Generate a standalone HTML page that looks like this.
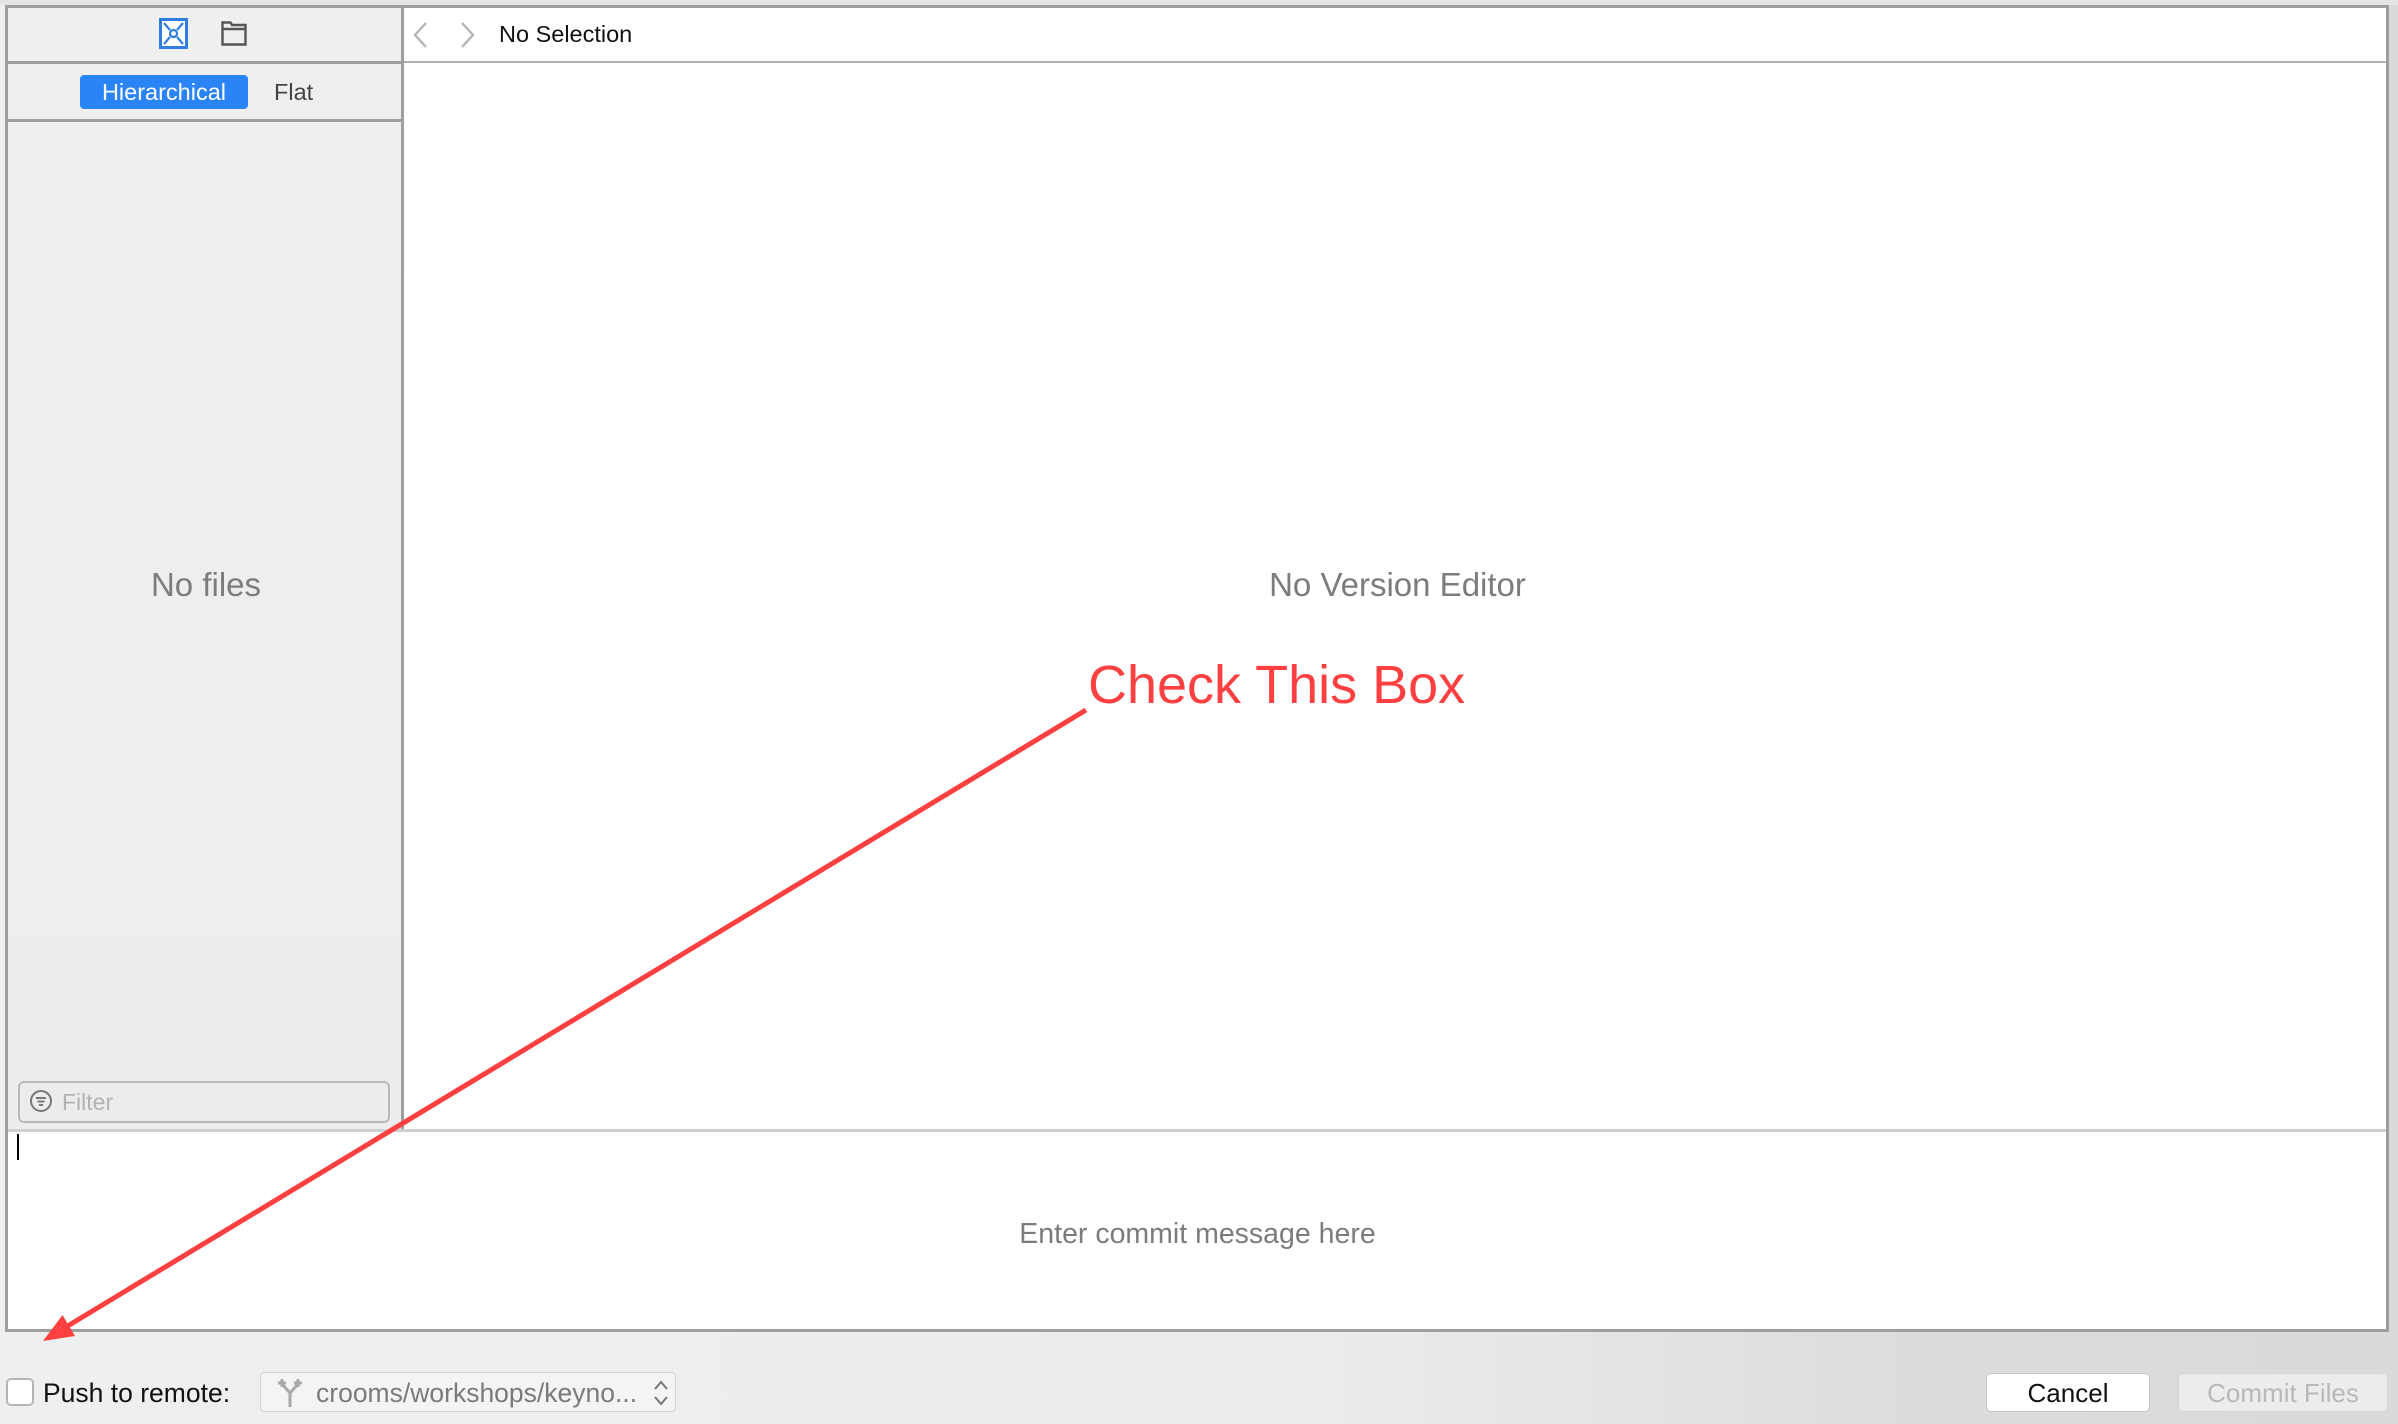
<!DOCTYPE html>
<html><head><meta charset="utf-8"><style>
*{margin:0;padding:0;box-sizing:border-box}
body{width:2398px;height:1424px;overflow:hidden;background:linear-gradient(90deg,#efefef 0%,#ececec 55%,#dcdcdd 80%,#dadadb 100%);font-family:"Liberation Sans",sans-serif;position:relative}
.a{position:absolute}
</style></head><body>
<div class="a" style="left:0;top:0;width:2398px;height:5px;background:#e4e4e4"></div>
<div class="a" style="left:5px;top:5px;width:2384px;height:1327px;border:3px solid #9e9e9e;background:#fff"></div>
<div class="a" style="left:8px;top:8px;width:396px;height:1123px;background:linear-gradient(180deg,#efefef,#ededed);border-right:3px solid #9e9e9e"></div>
<div class="a" style="left:8px;top:61px;width:396px;height:3px;background:#9e9e9e"></div>
<div class="a" style="left:8px;top:119px;width:396px;height:3px;background:#9e9e9e"></div>
<div class="a" style="left:404px;top:61px;width:1982px;height:2px;background:#b0b0b0"></div>
<svg class="a" style="left:159px;top:18px" width="29" height="31" viewBox="0 0 29 31"><rect width="29" height="31" fill="#2f7de1"/><rect x="3" y="3" width="23" height="25" fill="#fff"/><circle cx="14.5" cy="15.5" r="3.5" fill="none" stroke="#2f7de1" stroke-width="2.2"/><path d="M5 5l6 7M24 5l-6 7M5 26l6-7M24 26l-6-7" stroke="#2f7de1" stroke-width="2.2"/></svg>
<svg class="a" style="left:221px;top:21px" width="26" height="25" viewBox="0 0 26 25"><path d="M1.5 4V23.5H24.5V4H11L9.5 1.5H1.5V4Z M1.5 8H24.5" fill="none" stroke="#555" stroke-width="2.4"/></svg>
<div class="a" style="left:80px;top:75px;width:168px;height:34px;background:#2a84f5;border-radius:4px;color:#fff;font-size:23.5px;line-height:34px;text-align:center">Hierarchical</div>
<div class="a" style="left:274px;top:75px;font-size:23.5px;line-height:34px;color:#444">Flat</div>
<svg class="a" style="left:410px;top:20px" width="70" height="30" viewBox="0 0 70 30"><path d="M16 3L5 15L16 27" fill="none" stroke="#b5b5b5" stroke-width="2.4"/><path d="M52 3L63 15L52 27" fill="none" stroke="#b5b5b5" stroke-width="2.4"/></svg>
<div class="a" style="left:499px;top:21px;font-size:23.5px;color:#111">No Selection</div>
<div class="a" style="left:8px;top:566px;width:396px;text-align:center;font-size:33px;color:#7c7c7c">No files</div>
<div class="a" style="left:1100px;top:566px;width:595px;text-align:center;font-size:33px;color:#7c7c7c">No Version Editor</div>
<div class="a" style="left:18px;top:1081px;width:372px;height:42px;border:2px solid #b9b9b9;border-radius:6px;background:#ececec"></div>
<svg class="a" style="left:29px;top:1089px" width="24" height="24" viewBox="0 0 24 24"><circle cx="12" cy="12" r="10" fill="none" stroke="#777" stroke-width="2"/><path d="M7 9h10M8.5 12.5h7M10 16h4" stroke="#777" stroke-width="2"/></svg>
<div class="a" style="left:62px;top:1089px;font-size:23px;color:#b2b2b2">Filter</div>
<div class="a" style="left:8px;top:1129px;width:2378px;height:3px;background:#d0d0d0"></div>
<div class="a" style="left:17px;top:1134px;width:2px;height:26px;background:#000"></div>
<div class="a" style="left:800px;top:1218px;width:795px;text-align:center;font-size:28.5px;color:#7c7c7c">Enter commit message here</div>
<div class="a" style="left:6px;top:1378px;width:28px;height:28px;border:2px solid #b5b5b5;border-radius:5px;background:#fff"></div>
<div class="a" style="left:43px;top:1378px;font-size:26.5px;color:#111;white-space:nowrap">Push to remote:</div>
<div class="a" style="left:260px;top:1372px;width:416px;height:40px;border:1px solid #d4d4d4;border-radius:5px;background:#f4f4f4"></div>
<svg class="a" style="left:277px;top:1379px" width="26" height="28" viewBox="0 0 26 28"><path d="M13 28V14M13 14L5 5M13 14L21 5M1 4h8M5 0v8M17 4h8M21 0v8" fill="none" stroke="#a8a8a8" stroke-width="3"/></svg>
<div class="a" style="left:316px;top:1378px;font-size:26.5px;color:#7a7a7a;white-space:nowrap">crooms/workshops/keyno...</div>
<svg class="a" style="left:653px;top:1379px" width="16" height="28" viewBox="0 0 16 28"><path d="M2 10L8 3L14 10M2 18L8 25L14 18" fill="none" stroke="#777" stroke-width="2"/></svg>
<div class="a" style="left:1986px;top:1373px;width:164px;height:39px;border:1px solid #c5c5c5;border-radius:5px;background:#fff;text-align:center;font-size:26px;line-height:39px;color:#111">Cancel</div>
<div class="a" style="left:2178px;top:1373px;width:210px;height:39px;border:1px solid #d5d5d5;border-radius:5px;background:#ececec;text-align:center;font-size:26px;line-height:39px;color:#b8b8b8">Commit Files</div>
<div class="a" style="left:1088px;top:654px;font-size:54px;color:#fe4040;white-space:nowrap">Check This Box</div>
<svg class="a" style="left:0;top:0" width="2398" height="1424"><line x1="1086" y1="710" x2="66" y2="1327" stroke="#fe4040" stroke-width="5"/><polygon points="43,1341 62.5,1315 75,1336" fill="#fe4040"/></svg>
</body></html>
